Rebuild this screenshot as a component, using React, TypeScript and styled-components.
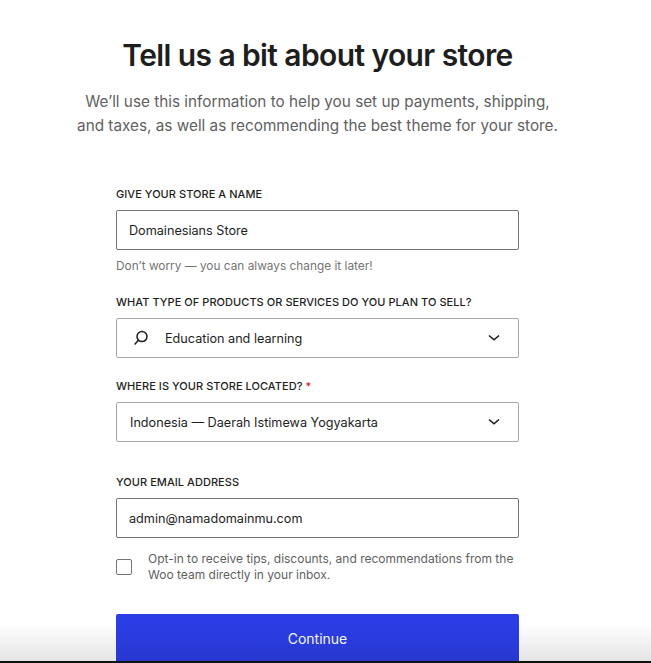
import React from 'react';
import styled, { createGlobalStyle } from 'styled-components';

const GlobalStyle = createGlobalStyle`
  html, body {
    margin: 0;
    padding: 0;
    height: 100%;
    background: #fff;
    overflow: hidden;
  }
  * {
    box-sizing: border-box;
  }
`;

const Page = styled.div`
  position: relative;
  width: 651px;
  height: 663px;
  overflow: hidden;
  padding-top: 35px;
  padding-right: 16px;
  font-family: Inter, 'Liberation Sans', sans-serif;
  color: #1e1e1e;
`;

const Title = styled.h1`
  margin: 0;
  font-size: 30px;
  line-height: 40px;
  font-weight: 600;
  letter-spacing: -0.6px;
  text-align: center;
  color: #1e1e1e;
`;

const Subtitle = styled.p`
  margin: 15px 0 0;
  font-size: 15.3px;
  line-height: 24px;
  text-align: center;
  color: #5f5f5f;
`;

const Form = styled.form`
  width: 403px;
  margin: 48px auto 0;
  display: flex;
  flex-direction: column;
`;

const Field = styled.div<{ $gap?: number }>`
  display: flex;
  flex-direction: column;
  margin-bottom: ${({ $gap }) => $gap ?? 0}px;
`;

const Label = styled.label`
  font-size: 11px;
  line-height: 16px;
  font-weight: 500;
  letter-spacing: 0.05px;
  color: #1e1e1e;
  margin-bottom: 8px;
  text-transform: uppercase;
`;

const Required = styled.span`
  color: #cc1818;
`;

const Box = styled.div<{ $strong?: boolean }>`
  height: 40px;
  display: flex;
  align-items: center;
  padding: 0 18px 0 ${({ $strong }) => ($strong ? 12 : 13)}px;
  border: 1px solid ${({ $strong }) => ($strong ? '#757575' : '#a7a7a7')};
  border-radius: 2px;
  font-size: 12.65px;
  color: #1e1e1e;
  background: #fff;
`;

const BoxText = styled.span`
  flex: 1;
`;

const SearchSlot = styled.span`
  width: 33px;
  margin-left: 2px;
  display: flex;
  align-items: center;
`;

const Help = styled.div`
  margin-top: 8px;
  font-size: 11.85px;
  line-height: 16px;
  color: #757575;
`;

const OptIn = styled.div`
  display: flex;
  align-items: center;
  margin-top: 13px;
  margin-bottom: 31px;
`;

const Check = styled.span`
  width: 16px;
  height: 16px;
  flex: none;
  border: 1px solid #757575;
  border-radius: 2px;
  margin-right: 16px;
`;

const OptInText = styled.div`
  font-size: 12px;
  line-height: 16px;
  color: #5f5f5f;
`;

const Continue = styled.button`
  width: 100%;
  height: 49px;
  border: none;
  border-radius: 2px;
  background: #2b3ee6;
  color: #fff;
  font-family: inherit;
  font-size: 14px;
  font-weight: 400;
  padding: 0;
`;

const BottomShade = styled.div`
  position: absolute;
  left: 0;
  right: 0;
  bottom: 0;
  height: 40px;
  background: linear-gradient(to bottom, rgba(0, 0, 0, 0), rgba(0, 0, 0, 0.1));
  border-bottom: 2px solid #111;
  pointer-events: none;
`;

const SearchIcon = () => (
  <svg width="18" height="18" viewBox="0 0 18 18" fill="none" stroke="#1e1e1e" strokeWidth="1.5">
    <circle cx="10" cy="7.6" r="5" />
    <path d="M6.4 11.2 2.6 15.4" />
  </svg>
);

const Chevron = () => (
  <svg width="12" height="8" viewBox="0 0 12 8" fill="none" stroke="#1e1e1e" strokeWidth="1.6">
    <path d="M1 1.5 6 5.8 11 1.5" />
  </svg>
);

export default function App() {
  return (
    <Page>
      <GlobalStyle />
      <Title>Tell us a bit about your store</Title>
      <Subtitle>
        We’ll use this information to help you set up payments, shipping,
        <br />
        and taxes, as well as recommending the best theme for your store.
      </Subtitle>
      <Form>
        <Field $gap={20}>
          <Label>Give your store a name</Label>
          <Box $strong>
            <BoxText>Domainesians Store</BoxText>
          </Box>
          <Help>Don’t worry — you can always change it later!</Help>
        </Field>
        <Field $gap={20}>
          <Label>What type of products or services do you plan to sell?</Label>
          <Box>
            <SearchSlot>
              <SearchIcon />
            </SearchSlot>
            <BoxText>Education and learning</BoxText>
            <Chevron />
          </Box>
        </Field>
        <Field $gap={32}>
          <Label>
            Where is your store located? <Required>*</Required>
          </Label>
          <Box>
            <BoxText>Indonesia — Daerah Istimewa Yogyakarta</BoxText>
            <Chevron />
          </Box>
        </Field>
        <Field>
          <Label>Your email address</Label>
          <Box $strong>
            <BoxText>admin@namadomainmu.com</BoxText>
          </Box>
        </Field>
        <OptIn>
          <Check />
          <OptInText>
            Opt-in to receive tips, discounts, and recommendations from the
            <br />
            Woo team directly in your inbox.
          </OptInText>
        </OptIn>
        <Continue type="button">Continue</Continue>
      </Form>
      <BottomShade />
    </Page>
  );
}
